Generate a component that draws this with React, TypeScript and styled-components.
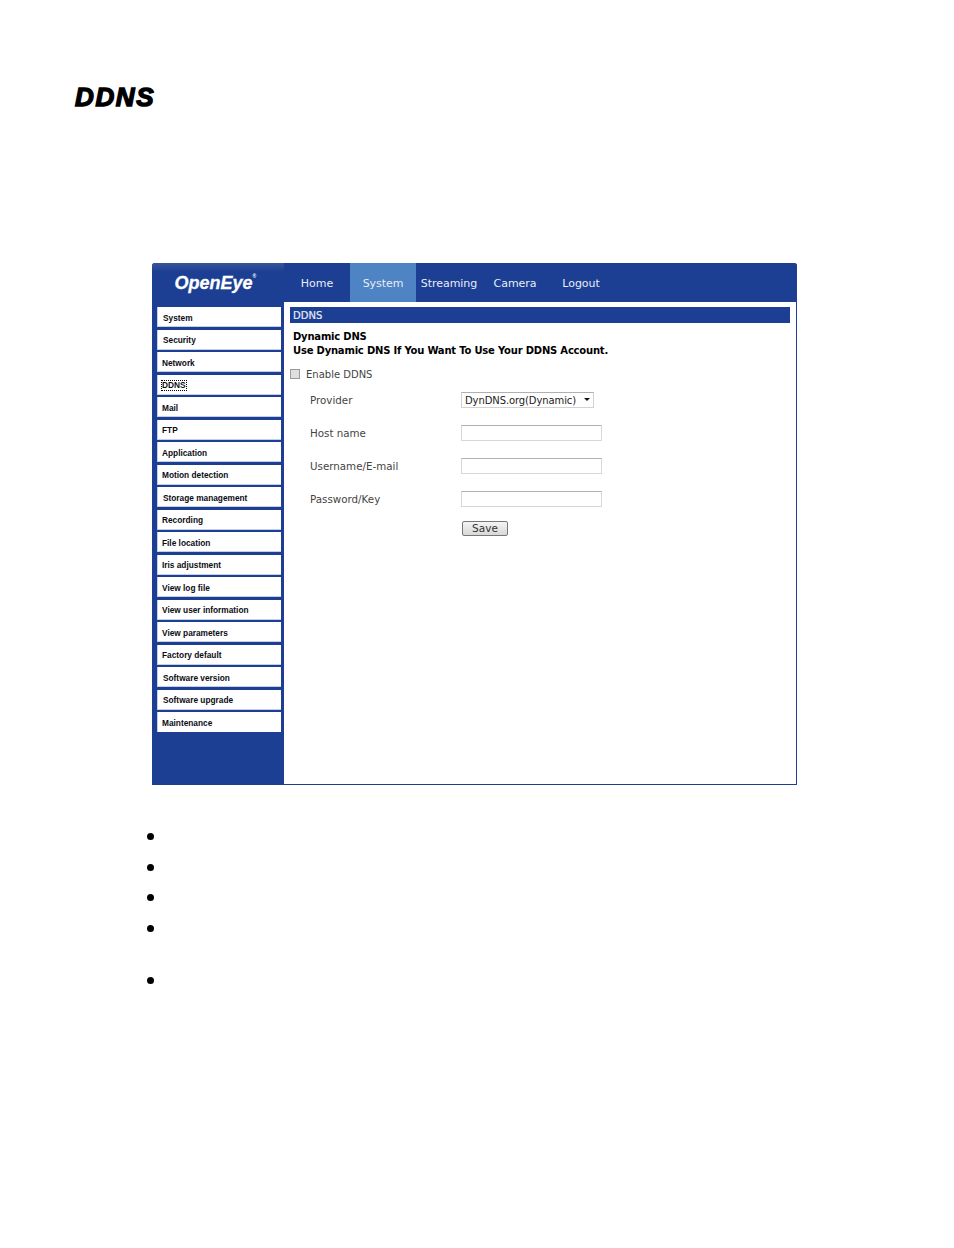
import React from 'react';
import styled, { createGlobalStyle } from 'styled-components';

const NAVY = '#1c3f94';

const menuItems = [
    { label: 'System', indent: 5 },
    { label: 'Security', indent: 5 },
    { label: 'Network', indent: 4 },
    { label: 'DDNS', indent: 4, focused: true },
    { label: 'Mail', indent: 4 },
    { label: 'FTP', indent: 4 },
    { label: 'Application', indent: 4 },
    { label: 'Motion detection', indent: 4 },
    { label: 'Storage management', indent: 5 },
    { label: 'Recording', indent: 4 },
    { label: 'File location', indent: 4 },
    { label: 'Iris adjustment', indent: 4 },
    { label: 'View log file', indent: 4 },
    { label: 'View user information', indent: 4 },
    { label: 'View parameters', indent: 4 },
    { label: 'Factory default', indent: 4 },
    { label: 'Software version', indent: 5 },
    { label: 'Software upgrade', indent: 5 },
    { label: 'Maintenance', indent: 4 },
];

const tabs = ['Home', 'System', 'Streaming', 'Camera', 'Logout'];
const textFields = ['Host name', 'Username/E-mail', 'Password/Key'];
const bullets = [31, 30, 31, 52, 0];

const App: React.FC = () => {
    return (
        <Page>
            <GlobalStyle />
            <Title>DDNS</Title>

            <Panel>
                <Header>
                    <LogoCell>
                        <Logo>
                            OpenEye<Reg>®</Reg>
                        </Logo>
                    </LogoCell>
                    <Tabs>
                        {tabs.map((tab) => (
                            <Tab key={tab} $active={tab === 'System'}>
                                {tab}
                            </Tab>
                        ))}
                    </Tabs>
                </Header>

                <Body>
                    <Sidebar>
                        {menuItems.map((item) => (
                            <MenuItem key={item.label} $indent={item.indent}>
                                <MenuLabel $focused={item.focused}>{item.label}</MenuLabel>
                            </MenuItem>
                        ))}
                    </Sidebar>

                    <Content>
                        <SectionBar>DDNS</SectionBar>
                        <Intro>
                            Dynamic DNS
                            <br />
                            Use Dynamic DNS If You Want To Use Your DDNS Account.
                        </Intro>
                        <EnableRow>
                            <Checkbox type="checkbox" />
                            Enable DDNS
                        </EnableRow>
                        <Form>
                            <FieldRow>
                                <FieldLabel>Provider</FieldLabel>
                                <SelectBox>
                                    DynDNS.org(Dynamic)
                                    <Caret />
                                </SelectBox>
                            </FieldRow>
                            {textFields.map((field) => (
                                <FieldRow key={field}>
                                    <FieldLabel>{field}</FieldLabel>
                                    <TextInput type="text" />
                                </FieldRow>
                            ))}
                            <SaveRow>
                                <SaveButton>Save</SaveButton>
                            </SaveRow>
                        </Form>
                    </Content>
                </Body>
            </Panel>

            <BulletList>
                {bullets.map((gap, i) => (
                    <Bullet key={i} $gap={gap} />
                ))}
            </BulletList>
        </Page>
    );
};

const GlobalStyle = createGlobalStyle`
    html, body {
        margin: 0;
        padding: 0;
        background: #fff;
    }
`;

const Page = styled.div`
    width: 954px;
    height: 1248px;
    box-sizing: border-box;
    padding: 84px 0 0 75px;
    overflow: hidden;
    background: #fff;
    font-family: 'DejaVu Sans', Verdana, sans-serif;
`;

const Title = styled.h1`
    margin: 0;
    height: 179px;
    font-family: 'Liberation Sans', Arial, sans-serif;
    font-size: 26px;
    line-height: 26px;
    font-weight: 700;
    font-style: italic;
    letter-spacing: 1.6px;
    color: #000;
    -webkit-text-stroke: 1.4px #000;
`;

const Panel = styled.div`
    width: 645px;
    height: 522px;
    margin-left: 77px;
    display: flex;
    flex-direction: column;
    box-sizing: border-box;
    border-right: 1px solid ${NAVY};
    border-bottom: 1px solid ${NAVY};
    border-radius: 3px 3px 0 0;
    background: #fff;
`;

const Header = styled.div`
    height: 39px;
    display: flex;
    flex: none;
    margin-right: -1px;
    background: ${NAVY};
    border-radius: 3px 3px 0 0;
`;

const LogoCell = styled.div`
    width: 132px;
    display: flex;
    align-items: center;
    justify-content: center;
    box-sizing: border-box;
    padding: 1px 9px 0 0;
    background: linear-gradient(#3a5596 0, ${NAVY} 9px);
    border-radius: 3px 0 0 0;
`;

const Logo = styled.div`
    position: relative;
    font-family: 'Liberation Sans', Arial, sans-serif;
    font-size: 18px;
    line-height: 20px;
    font-weight: 700;
    font-style: italic;
    color: #fff;
    letter-spacing: 0;
    -webkit-text-stroke: 0.3px #fff;
`;

const Reg = styled.sup`
    position: absolute;
    top: -1px;
    font-size: 5px;
    line-height: 8px;
    font-style: normal;
    -webkit-text-stroke: 0;
`;

const Tabs = styled.div`
    display: flex;
`;

const Tab = styled.div<{ $active?: boolean }>`
    width: 66px;
    display: flex;
    align-items: center;
    justify-content: center;
    padding-top: 2px;
    box-sizing: border-box;
    font-size: 11px;
    letter-spacing: -0.05px;
    white-space: nowrap;
    color: #e8edf6;
    background: ${(p) => (p.$active ? '#4e83c4' : 'transparent')};
`;

const Body = styled.div`
    flex: 1;
    display: flex;
    min-height: 0;
`;

const Sidebar = styled.nav`
    width: 132px;
    box-sizing: border-box;
    padding: 5px 3px 0 5px;
    display: flex;
    flex-direction: column;
    background: ${NAVY};
`;

const MenuItem = styled.div<{ $indent: number }>`
    height: 20px;
    flex: none;
    margin-bottom: 2.5px;
    display: flex;
    align-items: center;
    padding: 3px 0 0 ${(p) => p.$indent}px;
    box-sizing: border-box;
    background: #fff;
    border-left: 1px solid #c4cfe3;
    font-family: 'Liberation Sans', Arial, sans-serif;
    font-size: 8.3px;
    font-weight: 700;
    color: #0b0b14;

    &:not(:last-child) {
        border-bottom: 1px solid #c4cfe3;
    }
`;

const MenuLabel = styled.span<{ $focused?: boolean }>`
    outline: ${(p) => (p.$focused ? '1px dotted #000' : 'none')};
    line-height: 9px;
`;

const Content = styled.div`
    flex: 1;
    padding: 5px 6px 0;
    color: #333;
`;

const SectionBar = styled.div`
    height: 16px;
    padding: 0 3px;
    background: ${NAVY};
    color: #e8edf6;
    font-size: 10px;
    line-height: 17px;
    -webkit-text-stroke: 0.2px #e8edf6;
`;

const Intro = styled.div`
    margin: 7px 0 0 3px;
    font-size: 10px;
    line-height: 14px;
    font-weight: 700;
    letter-spacing: -0.2px;
    white-space: nowrap;
    color: #000;
`;

const EnableRow = styled.label`
    margin-top: 10px;
    height: 12px;
    display: flex;
    align-items: center;
    gap: 6px;
    font-size: 10px;
    color: #444;
`;

const Checkbox = styled.input`
    appearance: none;
    width: 10px;
    height: 10px;
    margin: 0;
    border: 1px solid #9a9a9a;
    background: #dedede;
`;

const Form = styled.div`
    margin: 12px 0 0 20px;
    display: flex;
    flex-direction: column;
    gap: 17px;
`;

const FieldRow = styled.div`
    height: 16px;
    display: flex;
    align-items: center;
`;

const FieldLabel = styled.div`
    width: 151px;
    font-size: 10.3px;
    color: #444;
`;

const SelectBox = styled.div`
    position: relative;
    width: 133px;
    height: 16px;
    box-sizing: border-box;
    padding-left: 3px;
    border: 1px solid #d2d2d2;
    border-top-color: #b0b0b0;
    font-size: 10px;
    line-height: 15px;
    letter-spacing: -0.1px;
    color: #222;
    white-space: nowrap;
`;

const Caret = styled.span`
    position: absolute;
    right: 3px;
    top: 5px;
    border-left: 3px solid transparent;
    border-right: 3px solid transparent;
    border-top: 3px solid #111;
`;

const TextInput = styled.input`
    width: 141px;
    height: 16px;
    box-sizing: border-box;
    margin: 0;
    padding: 0;
    border: 1px solid #d8d8d8;
    border-top-color: #b0b0b0;
    background: #fff;
`;

const SaveRow = styled.div`
    margin-top: -3px;
    padding-left: 152px;
`;

const SaveButton = styled.button`
    display: block;
    width: 46px;
    height: 15px;
    box-sizing: border-box;
    margin: 0;
    padding: 0;
    border: 1px solid #777;
    border-radius: 2px;
    background: linear-gradient(#f4f4f4, #d8d8d8);
    font-family: inherit;
    font-size: 10.5px;
    line-height: 13px;
    color: #333;
`;

const BulletList = styled.div`
    margin: 48px 0 0 72px;
    display: flex;
    flex-direction: column;
`;

const Bullet = styled.span<{ $gap: number }>`
    width: 7px;
    height: 7px;
    flex: none;
    margin-bottom: ${(p) => (p.$gap ? p.$gap - 7 : 0)}px;
    border-radius: 50%;
    background: #000;
`;

export default App;
